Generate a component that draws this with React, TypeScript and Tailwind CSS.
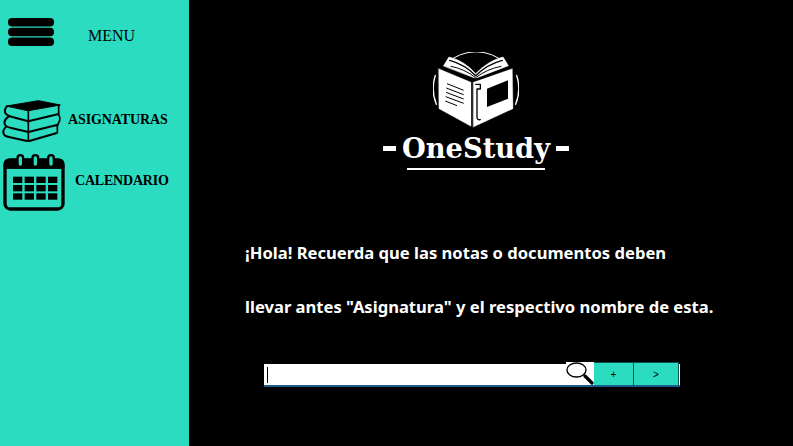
import React from 'react';

function MenuIcon() {
  return (
    <svg width="46" height="28" viewBox="0 0 46 28" className="shrink-0">
      <rect x="0" y="0" width="46" height="8.5" rx="4" fill="#000" />
      <rect x="0" y="9.7" width="46" height="8.5" rx="4" fill="#000" />
      <rect x="0" y="19.4" width="46" height="8.5" rx="4" fill="#000" />
    </svg>
  );
}

function BooksIcon() {
  return (
    <svg width="60" height="42" viewBox="6 30 180 126" className="shrink-0" fill="none" stroke="#000" strokeLinejoin="round" strokeLinecap="round">
      <path d="M20 48 L115 32 L181 45 L85 62 Z" fill="#000" strokeWidth="3" />
      <path d="M20 50 Q10 62 18 72 Q24 78 34 80 L85 94 L176 72" strokeWidth="6" />
      <path d="M85 64 V92 M176 48 V70" strokeWidth="5" />
      <path d="M26 80 Q8 92 16 106 Q22 112 34 114 L85 126 L174 104" strokeWidth="6" />
      <path d="M85 96 V124 M176 74 Q184 88 174 102" strokeWidth="5" />
      <path d="M18 110 Q4 124 14 136 Q20 140 30 142 L85 154 L168 130" strokeWidth="6" />
      <path d="M85 128 V152 M172 106 V128" strokeWidth="5" />
    </svg>
  );
}

function CalendarIcon() {
  const cells: React.ReactElement[] = [];
  for (let r = 0; r < 3; r++) {
    for (let c = 0; c < 4; c++) {
      cells.push(<rect key={r + '-' + c} x={33 + c * 35} y={68 + r * 25} width={28} height={19} fill="#000" />);
    }
  }
  return (
    <svg width="64" height="57" viewBox="0 0 192 171" className="shrink-0">
      <rect x="9" y="18" width="174" height="147" rx="16" fill="none" stroke="#000" strokeWidth="10" />
      <rect x="5" y="14" width="182" height="30" rx="14" fill="#000" />
      <rect x="5" y="32" width="182" height="12" fill="#000" />
      {[55, 100, 147].map((x) => (
        <g key={x}>
          <rect x={x - 12} y="0" width="24" height="42" rx="12" fill="#000" />
          <rect x={x - 5} y="7" width="10" height="28" rx="5" fill="#2bdcc0" />
        </g>
      ))}
      {cells}
    </svg>
  );
}

function BookLogo() {
  return (
    <svg width="86" height="76" viewBox="190 35 258 228" className="shrink-0" fill="none" stroke="#fff" strokeLinecap="round" strokeLinejoin="round">
      <path d="M232 68 A128 128 0 0 1 406 68" strokeWidth="3" />
      <path d="M197 105 A128 128 0 0 0 200 192" strokeWidth="4" />
      <path d="M441 105 A128 128 0 0 1 438 192" strokeWidth="4" />
      <path d="M222 76 L238 50 Q285 62 318 100 Q355 62 400 50 L416 76 L322 112 L314 112 Z" fill="#fff" strokeWidth="2" />
      <path d="M240 60 Q285 72 318 106 Q352 72 398 60" stroke="#000" strokeWidth="4" />
      <path d="M244 78 Q285 86 318 112 Q352 86 394 78" stroke="#000" strokeWidth="3" />
      <path d="M207 85 L304 126 V258 L208 205 Z" fill="#fff" strokeWidth="1" />
      <path d="M311 126 L428 85 L430 205 L311 260 Z" fill="#fff" strokeWidth="1" />
      <path d="M352 145 L415 120 V175 L352 200 Z" fill="#000" stroke="none" />
      <path d="M232 130 L282 150 M230 143 L282 163 M229 156 L282 176 M228 169 L282 189 M227 182 L262 196" stroke="#000" strokeWidth="3" strokeLinecap="butt" />
      <path d="M318 132 H332 V146 H322 V230 Q322 240 332 238" stroke="#000" strokeWidth="4" />
    </svg>
  );
}

function SearchGlass() {
  return (
    <svg width="28" height="23" viewBox="0 0 28 23" className="shrink-0">
      <ellipse cx="10.5" cy="8" rx="9.5" ry="7" fill="none" stroke="#000" strokeWidth="1.4" />
      <path d="M19 14 L26 21" stroke="#000" strokeWidth="3.2" strokeLinecap="round" />
    </svg>
  );
}

export default function App() {
  return (
    <div className="flex h-[446px] w-[793px] overflow-hidden bg-black">
      {/* Sidebar */}
      <aside className="flex w-[189px] shrink-0 flex-col bg-[#2bdcc0] font-['Liberation_Serif',serif] text-black">
        <div className="flex items-start pl-2 pt-[18px]">
          <MenuIcon />
          <span className="ml-[34px] text-[16px] leading-[36px]">MENU</span>
        </div>
        <div className="mt-[46px] flex items-center pl-[2px]">
          <BooksIcon />
          <span className="mb-[4px] ml-[6px] text-[14px] font-bold tracking-[-0.1px]">ASIGNATURAS</span>
        </div>
        <div className="mt-[12px] flex items-center pl-[2px]">
          <CalendarIcon />
          <span className="mb-[4px] ml-[9px] text-[14px] font-bold tracking-[-0.2px]">CALENDARIO</span>
        </div>
      </aside>

      {/* Main */}
      <main className="flex flex-1 flex-col">
        <div className="flex flex-col items-center pr-[30px] pt-[52px]">
          <BookLogo />
          <div className="mt-[2px] flex items-center gap-[6px] font-['DejaVu_Serif',serif] text-[27.3px] font-bold leading-[36px] text-white">
            <span className="h-[5px] w-[13px] bg-white" />
            <span>OneStudy</span>
            <span className="h-[5px] w-[13px] bg-white" />
          </div>
          <div className="mt-[2px] h-[2px] w-[138px] bg-white" />
        </div>

        <div className="ml-[56px] mt-[71px] font-['Noto_Sans',sans-serif] text-[16.6px] font-bold text-white">
          <p className="leading-[24px]">¡Hola! Recuerda que las notas o documentos deben</p>
          <p className="mt-[30px] leading-[24px]">llevar antes "Asignatura" y el respectivo nombre de esta.</p>
        </div>

        <div className="ml-[75px] mt-[43px] flex h-[25px] w-[416px] items-end border-b-2 border-[#1c5c8c] font-['Liberation_Sans',sans-serif] text-[10px] text-black">
          <div className="flex h-[21px] flex-1 items-center bg-white pl-[3px]">
            <span className="h-[16px] w-[1px] bg-black" />
          </div>
          <div className="h-[23px] bg-white">
            <SearchGlass />
          </div>
          <div className="flex h-[23px] w-[39px] items-center justify-center border-t border-[#0f5050] bg-[#2bdcc0]">+</div>
          <div className="flex h-[23px] w-[46px] items-center justify-center border-x border-t border-[#0f5050] bg-[#2bdcc0]">&gt;</div>
          <div className="h-[21px] w-[1px] bg-white" />
        </div>
      </main>
    </div>
  );
}
